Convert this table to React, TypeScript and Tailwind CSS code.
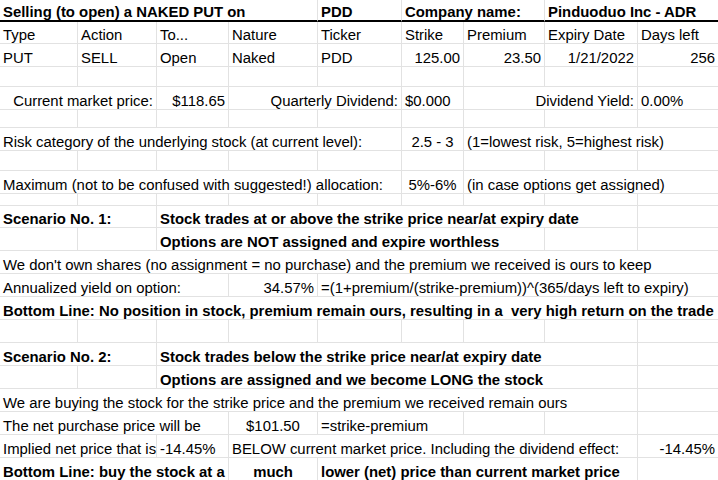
type Cell = {
  t?: string;
  span?: number;
  align?: "left" | "right" | "center";
  bold?: boolean;
};

const cols = "grid-cols-[78px_79px_72px_89px_84px_62px_81px_93px_81px]";

const empty = (n: number): Cell[] => Array.from({ length: n }, () => ({}));

// each row: height incl. bottom gridline, then cells
const rows: { h: string; cells: Cell[]; thick?: boolean }[] = [
  {
    h: "h-[22px]",
    thick: true,
    cells: [
      { t: "Selling (to open) a NAKED PUT on", span: 4, bold: true },
      { t: "PDD", bold: true },
      { t: "Company name:", span: 2, bold: true },
      { t: "Pinduoduo Inc - ADR", span: 2, bold: true },
    ],
  },
  {
    h: "h-[22px]",
    cells: ["Type", "Action", "To...", "Nature", "Ticker", "Strike", "Premium", "Expiry Date", "Days left"].map(
      (t) => ({ t })
    ),
  },
  {
    h: "h-[23px]",
    cells: [
      { t: "PUT" },
      { t: "SELL" },
      { t: "Open" },
      { t: "Naked" },
      { t: "PDD" },
      { t: "125.00", align: "right" },
      { t: "23.50", align: "right" },
      { t: "1/21/2022", align: "right" },
      { t: "256", align: "right" },
    ],
  },
  { h: "h-[20px]", cells: empty(9) },
  {
    h: "h-[23px]",
    cells: [
      { t: "Current market price:", span: 2, align: "right" },
      { t: "$118.65", align: "right" },
      { t: "Quarterly Dividend:", span: 2, align: "right" },
      { t: "$0.000" },
      { t: "Dividend Yield:", span: 2, align: "right" },
      { t: "0.00%" },
    ],
  },
  { h: "h-[18px]", cells: empty(9) },
  {
    h: "h-[23px]",
    cells: [
      { t: "Risk category of the underlying stock (at current level):", span: 5 },
      { t: "2.5 - 3", align: "center" },
      { t: "(1=lowest risk, 5=highest risk)", span: 3 },
    ],
  },
  { h: "h-[20px]", cells: empty(9) },
  {
    h: "h-[23px]",
    cells: [
      { t: "Maximum (not to be confused with suggested!) allocation:", span: 5 },
      { t: "5%-6%", align: "center" },
      { t: "(in case options get assigned)", span: 3 },
    ],
  },
  { h: "h-[12px]", cells: empty(9) },
  {
    h: "h-[22px]",
    cells: [
      { t: "Scenario No. 1:", span: 2, bold: true },
      { t: "Stock trades at or above the strike price near/at expiry date", span: 6, bold: true },
      {},
    ],
  },
  {
    h: "h-[23px]",
    cells: [{}, {}, { t: "Options are NOT assigned and expire worthless", span: 5, bold: true }, {}, {}],
  },
  {
    h: "h-[23px]",
    cells: [{ t: "We don't own shares (no assignment = no purchase) and the premium we received is ours to keep", span: 9 }],
  },
  {
    h: "h-[23px]",
    cells: [
      { t: "Annualized yield on option:", span: 3 },
      { t: "34.57%", align: "right" },
      { t: "=(1+premium/(strike-premium))^(365/days left to expiry)", span: 5 },
    ],
  },
  {
    h: "h-[23px]",
    cells: [
      {
        t: "Bottom Line: No position in stock, premium remain ours, resulting in a  very high return on the trade",
        span: 9,
        bold: true,
      },
    ],
  },
  { h: "h-[23px]", cells: empty(9) },
  {
    h: "h-[23px]",
    cells: [
      { t: "Scenario No. 2:", span: 2, bold: true },
      { t: "Stock trades below the strike price near/at expiry date", span: 6, bold: true },
      {},
    ],
  },
  {
    h: "h-[23px]",
    cells: [{}, {}, { t: "Options are assigned and we become LONG the stock", span: 6, bold: true }, {}],
  },
  {
    h: "h-[23px]",
    cells: [{ t: "We are buying the stock for the strike price and the premium we received remain ours", span: 8 }, {}],
  },
  {
    h: "h-[23px]",
    cells: [
      { t: "The net purchase price will be", span: 3 },
      { t: "$101.50", align: "center" },
      { t: "=strike-premium", span: 2 },
      {},
      {},
      {},
    ],
  },
  {
    h: "h-[23px]",
    cells: [
      { t: "Implied net price that is", span: 2 },
      { t: "-14.45%" },
      { t: "BELOW current market price. Including the dividend effect:", span: 5 },
      { t: "-14.45%", align: "right" },
    ],
  },
  {
    h: "h-[23px]",
    cells: [
      { t: "Bottom Line: buy the stock at a", span: 3, bold: true },
      { t: "much", align: "center", bold: true },
      { t: "lower (net) price than current market price", span: 4, bold: true },
      {},
    ],
  },
];

const spanCls: Record<number, string> = {
  1: "col-span-1",
  2: "col-span-2",
  3: "col-span-3",
  4: "col-span-4",
  5: "col-span-5",
  6: "col-span-6",
  8: "col-span-8",
  9: "col-span-9",
};

const alignCls = {
  left: "justify-start",
  right: "justify-end",
  center: "justify-center",
};

export default function App() {
  return (
    <div className="w-[718px] h-[480px] overflow-hidden bg-white text-black font-['Liberation_Sans',Arial,sans-serif] text-[14.9px] leading-[15px]">
      <div className="w-[719px]">
        {rows.map((row, ri) => (
          <div key={ri} className={`grid ${cols} ${row.h}`}>
            {row.cells.map((c, ci) => (
              <div
                key={ci}
                className={`${spanCls[c.span ?? 1]} flex items-end ${alignCls[c.align ?? "left"]} px-[3px] whitespace-pre overflow-visible border-r border-[#e2e2e2] ${
                  row.thick ? "border-b-2 border-b-black" : "border-b"
                } ${c.bold ? "font-bold" : ""}`}
              >
                {c.t}
              </div>
            ))}
          </div>
        ))}
      </div>
    </div>
  );
}
